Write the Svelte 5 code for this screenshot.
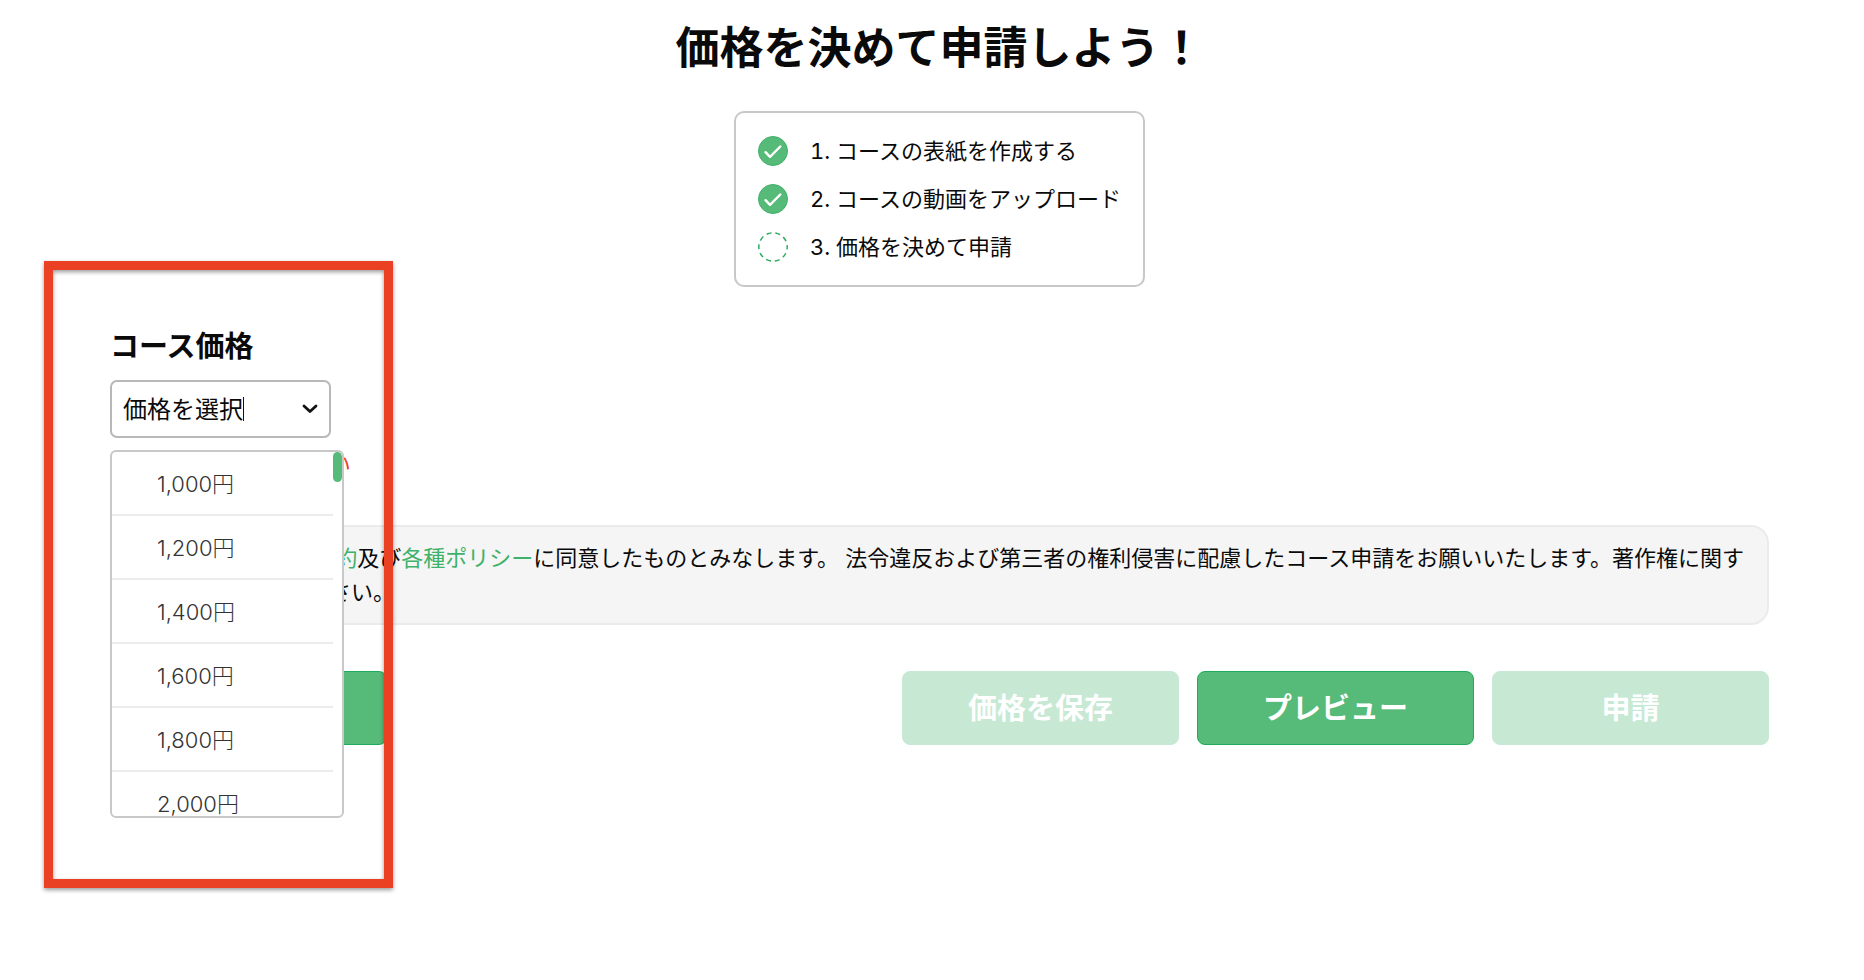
<script lang="ts">
	type Step = { label: string; done: boolean };

	const steps: Step[] = [
		{ label: '1. コースの表紙を作成する', done: true },
		{ label: '2. コースの動画をアップロード', done: true },
		{ label: '3. 価格を決めて申請', done: false },
	];

	const prices = [1000, 1200, 1400, 1600, 1800, 2000];

	let query = $state('価格を選択');
	let open = $state(true);
	let selected: number | null = $state(null);

	function formatPrice(value: number): string {
		return `${value.toLocaleString('en-US')}円`;
	}

	function choose(value: number) {
		selected = value;
		query = formatPrice(value);
		open = false;
	}
</script>

<main class="page">
	<h1 class="title">価格を決めて申請しよう！</h1>

	<ol class="steps">
		{#each steps as step}
			<li class="step">
				<svg class="step__icon" viewBox="0 0 30 30" aria-hidden="true">
					{#if step.done}
						<circle cx="15" cy="15" r="14.5" fill="#56ba79" stroke="#3fb26a" />
						<path
							d="M7.5 16.2 12 20.8 22.3 10.5"
							fill="none"
							stroke="#fff"
							stroke-width="2.4"
							stroke-linecap="round"
							stroke-linejoin="round"
						/>
					{:else}
						<circle
							cx="15"
							cy="15"
							r="14.2"
							fill="none"
							stroke="#2bab5c"
							stroke-width="1.5"
							stroke-dasharray="5 3.92"
							stroke-dashoffset="2.5"
						/>
					{/if}
				</svg>
				<span>{step.label}</span>
			</li>
		{/each}
	</ol>

	<section class="price">
		<label class="price__label" for="course-price">コース価格</label>

		<div class="combo">
			<div class="combo__box">
				<input
					id="course-price"
					class="combo__input"
					type="text"
					role="combobox"
					aria-expanded={open}
					aria-controls="price-list"
					bind:value={query}
					onfocus={() => (open = true)}
				/>
				<span class="combo__caret"></span>
				<svg class="combo__arrow" viewBox="0 0 16 12" aria-hidden="true">
					<path
						d="M2 3 8 8.6 14 3"
						fill="none"
						stroke="#111"
						stroke-width="2.8"
						stroke-linecap="round"
						stroke-linejoin="round"
					/>
				</svg>
			</div>

			{#if open}
				<div class="menu">
					<div id="price-list" class="menu__list" role="listbox" aria-label="コース価格">
						{#each prices as price}
							<button
								type="button"
								class="menu__item"
								role="option"
								aria-selected={selected === price}
								onclick={() => choose(price)}
							>
								{formatPrice(price)}
							</button>
						{/each}
					</div>
					<span class="menu__thumb"></span>
				</div>
			{/if}
		</div>

		<p class="price__error">価格を選択してください</p>
		<div class="highlight" aria-hidden="true"></div>
	</section>

	<p class="notice">
		申請の際は、 <a href="#terms">利用規約</a>及び<a href="#policies">各種ポリシー</a>に同意したものとみなします。 法令違反および第三者の権利侵害に配慮したコース申請をお願いいたします。著作権に関する規定をご確認ください。
	</p>

	<div class="actions">
		<button type="button" class="btn btn--back">戻る</button>
		<button type="button" class="btn" disabled>価格を保存</button>
		<button type="button" class="btn">プレビュー</button>
		<button type="button" class="btn" disabled>申請</button>
	</div>
</main>

<style>
	:global(body) {
		background: #fff;
	}

	.page {
		box-sizing: border-box;
		min-height: 100vh;
		padding: 18px 95px 60px 110px;
		font-family: Inter, 'Noto Sans CJK JP', sans-serif;
		font-size: 22px;
		line-height: 34px;
		color: #0a0a0a;
	}

	.title {
		margin: 0 0 33px;
		font-size: 44px;
		line-height: 60px;
		font-weight: 700;
		text-align: center;
	}

	.steps {
		box-sizing: border-box;
		width: fit-content;
		margin: 0 auto;
		padding: 14px 22px;
		border: 2px solid #c8c8c8;
		border-radius: 10px;
		font-variant-numeric: tabular-nums;
		list-style: none;
	}

	.step {
		display: flex;
		align-items: center;
		gap: 22px;
		height: 48px;
	}

	.step__icon {
		width: 30px;
		height: 30px;
		flex: none;
	}

	.price {
		position: relative;
		margin-top: 38px;
	}

	.price__label {
		display: block;
		margin-bottom: 11px;
		font-size: 29px;
		line-height: 44px;
		font-weight: 700;
	}

	.combo {
		position: relative;
		width: 221px;
	}

	.combo__box {
		box-sizing: border-box;
		display: flex;
		align-items: center;
		height: 58px;
		padding: 0 11px;
		border: 2px solid #b8b8b8;
		border-radius: 7px;
		background: #fff;
	}

	.combo__input {
		width: 120px;
		padding: 0 0 4px;
		border: 0;
		outline: none;
		background: none;
		font-family: inherit;
		font-size: 24px;
		color: inherit;
	}

	.combo__caret {
		width: 1px;
		height: 24px;
		background: #111;
	}

	.combo__arrow {
		width: 16px;
		height: 12px;
		margin-left: auto;
	}

	/* Floats over the notice and the action row. */
	.menu {
		position: absolute;
		z-index: 2;
		top: 70px;
		left: 0;
		box-sizing: border-box;
		width: 234px;
		height: 368px;
		overflow: hidden;
		border: 2px solid #c8c8c8;
		border-radius: 6px;
		background: #fff;
	}

	.menu__list {
		height: 100%;
		margin-right: 9px;
		overflow-y: auto;
		scrollbar-width: none;
	}

	.menu__item {
		box-sizing: border-box;
		display: block;
		width: 100%;
		height: 64px;
		padding: 0 0 3px 45px;
		border: 0;
		border-bottom: 2px solid #ececec;
		background: none;
		font-family: inherit;
		font-size: 22px;
		font-weight: 300;
		text-align: left;
		color: #333;
		cursor: pointer;
	}

	.menu__thumb {
		position: absolute;
		top: 0;
		right: 0;
		width: 9px;
		height: 30px;
		border-radius: 5px;
		background: #56ba79;
	}

	.price__error {
		margin: 9px 0 0;
		color: #ea4024;
	}

	.highlight {
		position: absolute;
		z-index: 3;
		top: -64px;
		left: -66px;
		box-sizing: border-box;
		width: 349px;
		height: 627px;
		border: 9px solid #ea4024;
		filter: drop-shadow(0 2px 2px rgba(0, 0, 0, 0.4));
		pointer-events: none;
	}

	.notice {
		margin: 44px 0 0;
		padding: 14px 16px 14px 19px;
		border: 2px solid #ebebeb;
		border-radius: 18px;
		background: #f5f5f5;
	}

	.notice a {
		color: #3fb26a;
		text-decoration: none;
	}

	.actions {
		display: flex;
		gap: 18px;
		margin-top: 46px;
	}

	.btn {
		box-sizing: border-box;
		width: 277px;
		height: 74px;
		padding: 0 0 4px;
		border: 1px solid #1fab5c;
		border-radius: 8px;
		background: #56ba79;
		font-family: inherit;
		font-size: 29px;
		font-weight: 700;
		color: #fff;
		cursor: pointer;
	}

	.btn:disabled {
		border-color: #c7e9d4;
		background: #c7e9d4;
		cursor: default;
	}

	.btn--back {
		margin-right: auto;
	}
</style>
